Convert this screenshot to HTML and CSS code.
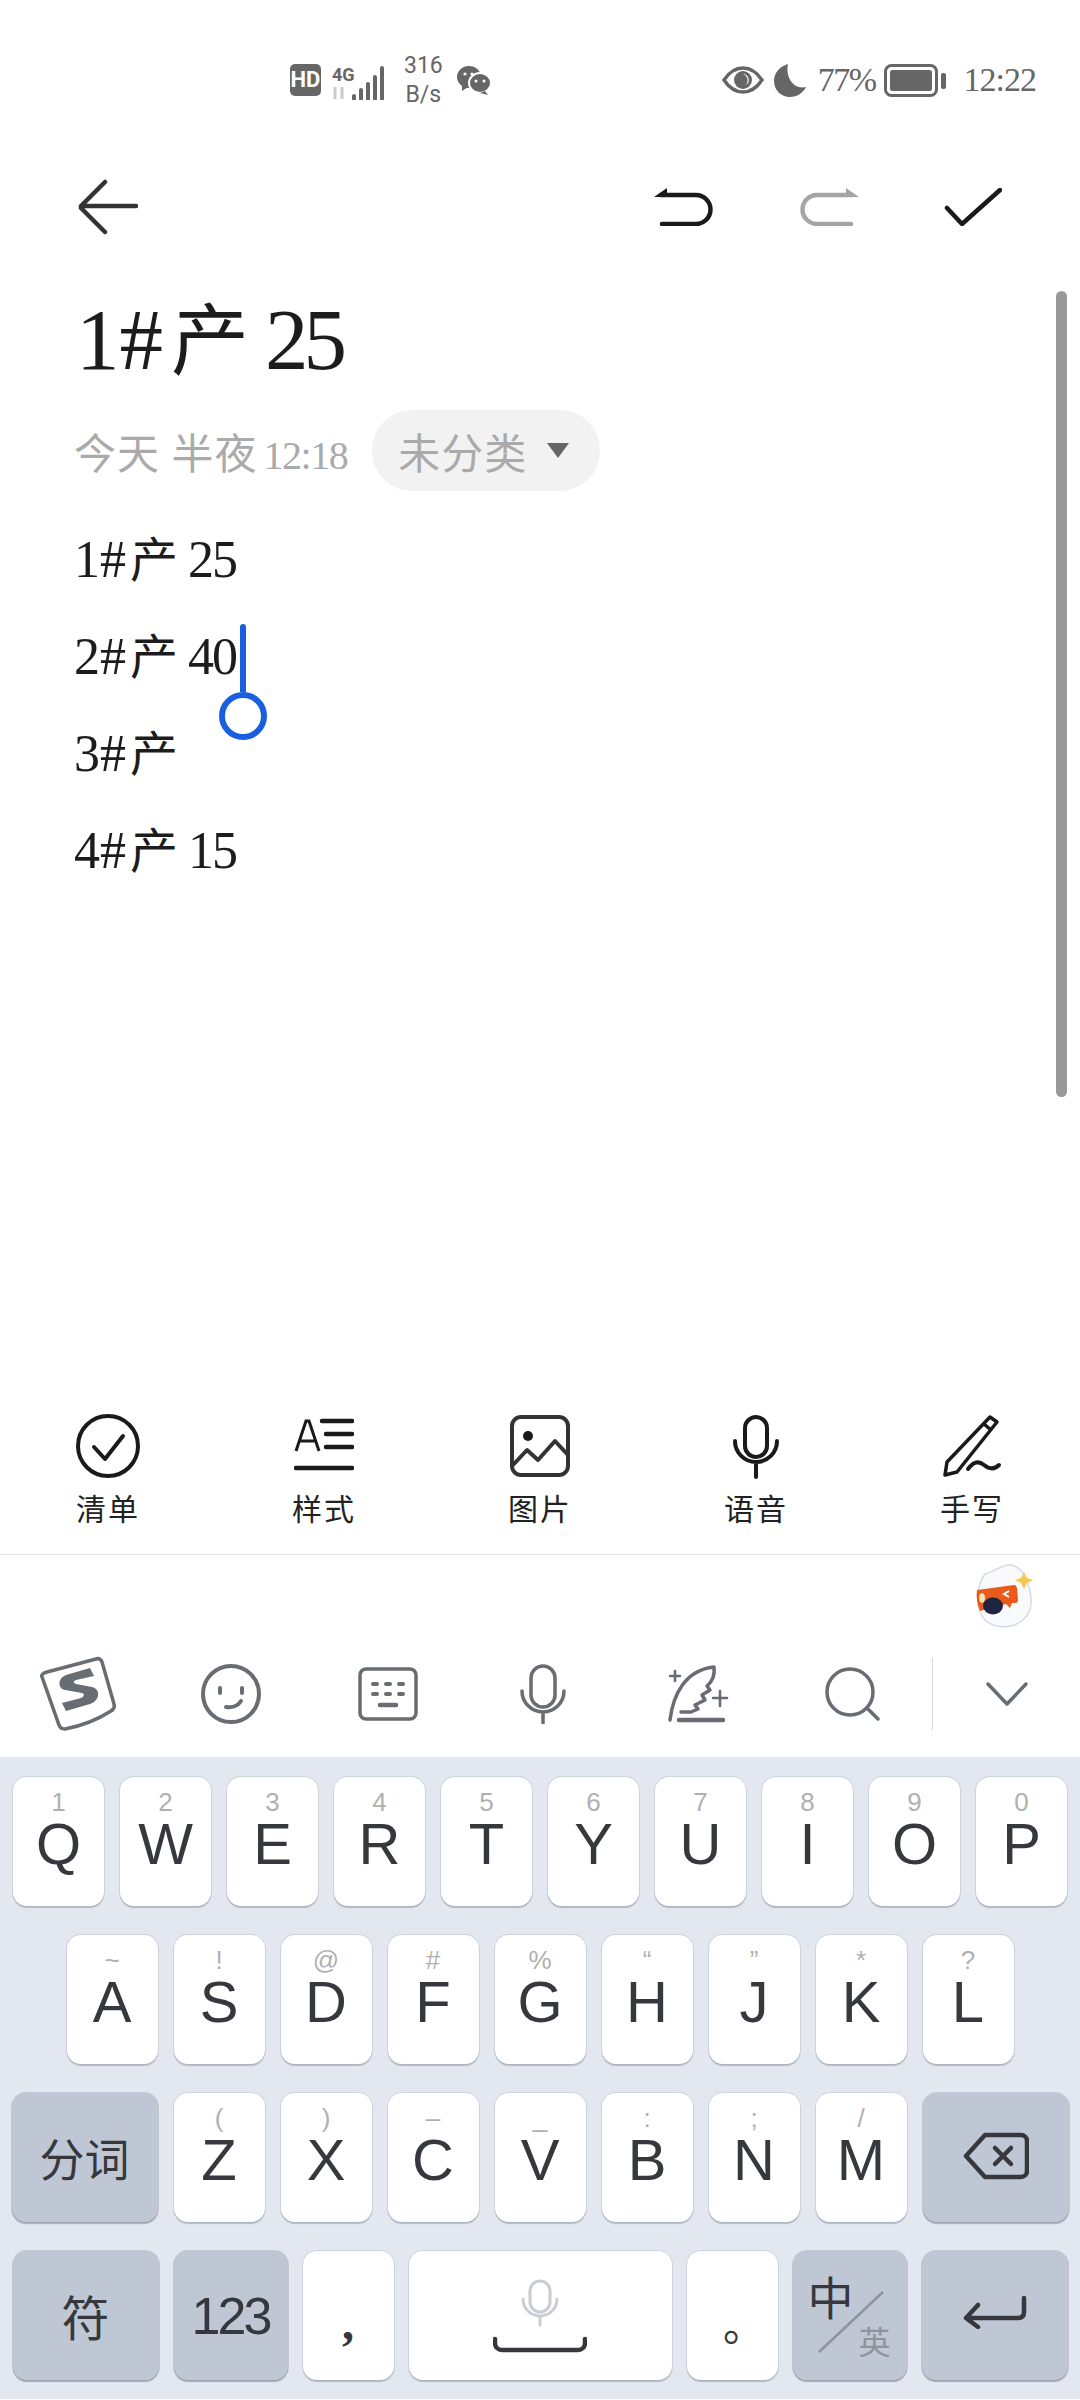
FILE: index.html
```html
<!DOCTYPE html>
<html lang="zh-CN">
<head>
  <meta charset="UTF-8">
  <title>备忘录</title>
  <link rel="stylesheet" href="styles.css">
</head>
<body>

  <!-- Status bar -->
  <div class="status">
    <svg class="st-hd" width="31" height="32" viewBox="0 0 31 32"><rect width="31" height="32" rx="5" fill="#666"/><text x="15.5" y="23" class="hd-text">HD</text></svg>
    <svg class="st-net" width="54" height="37" viewBox="0 -3 54 37">
      <text x="0" y="15" class="net-text">4G</text>
      <path d="M3 33V21M10 33V21" stroke="#ccc" stroke-width="3" fill="none"/>
      <path d="M22 33v-3M29 33v-9M36 33v-15M43 33v-22M50 33V2" stroke="#666" stroke-width="4" stroke-linecap="round" fill="none"/>
    </svg>
    <div class="speed"><span>316</span><span>B/s</span></div>
    <svg width="35" height="30" viewBox="0 0 35 30">
      <ellipse cx="13" cy="12" rx="12" ry="11" fill="#666"/>
      <path d="M6 20l0 6 6-4z" fill="#666"/>
      <ellipse cx="24" cy="18" rx="11" ry="10" fill="#666" stroke="#fff" stroke-width="2"/>
      <path d="M29 26l3 4-8-2z" fill="#666"/>
      <circle cx="9" cy="9" r="1.6" fill="#fff"/><circle cx="16" cy="9" r="1.6" fill="#fff"/>
      <circle cx="20" cy="16" r="1.5" fill="#fff"/><circle cx="28" cy="16" r="1.5" fill="#fff"/>
    </svg>
    <div class="status-right">
      <svg width="42" height="28" viewBox="0 0 42 28">
        <path d="M2 14C8 5 14 2 21 2s13 3 19 12c-6 9-12 12-19 12S8 23 2 14z" fill="none" stroke="#666" stroke-width="3.5"/>
        <circle cx="21" cy="14" r="9" fill="#666"/>
        <path d="M21 8a6 6 0 0 1 3 11 7 7 0 0 0-3-11z" fill="#fff"/>
      </svg>
      <svg class="moon" width="32" height="33" viewBox="0 0 32 33"><path d="M14 0C5 3 0 9 0 17c0 9 7 16 16 16 7 0 13-4 16-10-11 3-21-8-18-23z" fill="#666"/></svg>
      <span class="pct">77%</span>
      <svg class="batt" width="62" height="33" viewBox="0 0 62 33">
        <rect x="1.5" y="1.5" width="51" height="30" rx="6" fill="none" stroke="#666" stroke-width="3"/>
        <rect x="6" y="6" width="42" height="21" rx="2.5" fill="#666"/>
        <rect x="57" y="9" width="5" height="16" rx="2" fill="#666"/>
      </svg>
      <span class="clock">12:22</span>
    </div>
  </div>

  <!-- Top actions -->
  <div class="topbar">
    <svg class="back" width="60" height="56" viewBox="0 0 60 56">
      <path d="M27 3L3 27h55M3 29l24 24" fill="none" stroke="#333" stroke-width="4.5" stroke-linecap="round" stroke-linejoin="round"/>
    </svg>
    <div class="actions">
      <svg width="62" height="38" viewBox="0 0 62 38">
        <path d="M8 7h35a14.500 14.500 0 0 1 0 29H9" fill="none" stroke="#1a1a1a" stroke-width="4.5" stroke-linecap="round"/>
        <path d="M1 9L14 0v9z" fill="#1a1a1a"/>
      </svg>
      <svg class="redo" width="62" height="38" viewBox="0 0 62 38">
        <path d="M54 7H19a14.500 14.500 0 0 0 0 29h34" fill="none" stroke="#a5a5a5" stroke-width="4.5" stroke-linecap="round"/>
        <path d="M61 9L48 0v9z" fill="#a5a5a5"/>
      </svg>
      <svg class="check" width="58" height="38" viewBox="0 0 58 38">
        <path d="M3 20l15 16L56 2" fill="none" stroke="#1a1a1a" stroke-width="4.5" stroke-linecap="round" stroke-linejoin="round"/>
      </svg>
    </div>
  </div>

  <!-- Note -->
  <div class="note">
    <h1 class="title">1#<span class="han">产</span><span class="num">25</span></h1>
    <div class="meta">
      <span class="date">今天 半夜<span class="date-num">12:18</span></span>
      <span class="pill">未分类<i class="tri"></i></span>
    </div>
    <div class="lines">
      <p>1#<span class="han">产</span><span class="num">25</span></p>
      <p>2#<span class="han">产</span><span class="num">40</span></p>
      <p>3#<span class="han">产</span></p>
      <p>4#<span class="han">产</span><span class="num">15</span></p>
    </div>
    <div class="caret"><i class="caret-bar"></i><i class="caret-knob"></i></div>
    <div class="scrollbar"></div>
  </div>

  <!-- Note tools -->
  <div class="tools">
    <div class="tool">
      <svg width="64" height="66" viewBox="0 0 64 66"><circle cx="32" cy="33" r="30" fill="none" stroke="#1a1a1a" stroke-width="4"/><path d="M18 34l11 12 18-23" fill="none" stroke="#1a1a1a" stroke-width="4" stroke-linecap="round" stroke-linejoin="round"/></svg>
      <span>清单</span>
    </div>
    <div class="tool">
      <svg width="60" height="66" viewBox="0 0 60 66"><path d="M2 38L12 8h3l10 30M6 28h15" fill="none" stroke="#1a1a1a" stroke-width="3"/><path d="M28 8h30M32 21h26M32 34h26M2 55h56" fill="none" stroke="#1a1a1a" stroke-width="4.5" stroke-linecap="round"/></svg>
      <span>样式</span>
    </div>
    <div class="tool">
      <svg width="60" height="66" viewBox="0 0 60 66"><rect x="2" y="4" width="56" height="58" rx="9" fill="none" stroke="#333" stroke-width="4"/><circle cx="18" cy="23" r="5" fill="#1a1a1a"/><path d="M3 52l14-15 11 10 17-19 13 14" fill="none" stroke="#333" stroke-width="4" stroke-linejoin="round"/></svg>
      <span>图片</span>
    </div>
    <div class="tool">
      <svg width="46" height="66" viewBox="0 0 46 66"><rect x="12" y="4" width="22" height="40" rx="11" fill="none" stroke="#1a1a1a" stroke-width="4"/><path d="M2 28a21 21 0 0 0 42 0M23 50v14" fill="none" stroke="#1a1a1a" stroke-width="4" stroke-linecap="round"/></svg>
      <span>语音</span>
    </div>
    <div class="tool">
      <svg width="60" height="66" viewBox="0 0 60 66"><path d="M48 4l7 5-40 50-12 3 2-13zM42 11l7 6" fill="none" stroke="#1a1a1a" stroke-width="3.500" stroke-linejoin="round"/><path d="M26 56c6-8 11-8 16-4s10 5 15 0" fill="none" stroke="#1a1a1a" stroke-width="4" stroke-linecap="round"/></svg>
      <span>手写</span>
    </div>
  </div>

  <!-- Input method -->
  <div class="candidates">
    <svg width="60" height="68" viewBox="0 0 60 68">
      <path d="M10 12C20 10 26 2 36 3c8 1 13 8 16 16 5 14 7 30-4 39-11 9-28 9-38 0C0 48 1 24 10 12z" fill="#f9fafc" stroke="#d5dae4" stroke-width="1.500"/>
      <path d="M2 28l37-5c2 0 2 1 3 3l1 12c0 2-1 3-3 3h-3l-2 5-4-4-26 7c-3-7-4-14-3-21z" fill="#ea5a1c"/>
      <ellipse cx="7" cy="36" rx="3" ry="5" fill="#fbe3b4"/>
      <path d="M34 29l-5 3 5 3" fill="none" stroke="#fff" stroke-width="2"/>
      <ellipse cx="18" cy="44" rx="10" ry="8.500" fill="#1f2440"/>
      <path d="M49 10l3 6 6 2-6 3-3 6-3-6-6-3 6-2z" fill="#f5c851"/>
    </svg>
  </div>
  <div class="imebar">
    <div class="ime-cell">
      <svg width="80" height="76" viewBox="0 0 80 76">
        <path d="M9 16L58 3c3-1 5 0 6 3l12 42c1 3 0 5-3 7-14 9-30 15-46 18-3 0-5-1-6-4L4 21c-1-2 1-4 5-5z" fill="none" stroke="#686c73" stroke-width="3.500"/>
        <path d="M56 20l-4-8-24 7c-8 3-9 13-1 15l17 3c3 1 2 4-1 5l-19 5 4 8 24-7c10-3 11-15 2-17l-16-3c-3-1-3-3 0-4z" fill="#686c73"/>
      </svg>
    </div>
    <div class="ime-cell smile">
      <svg width="60" height="60" viewBox="0 0 60 60"><circle cx="30" cy="30" r="28" fill="none" stroke="#686c73" stroke-width="4"/><path d="M19 24v5M41 24v5M25 43c6 1 12-1 15-6" fill="none" stroke="#686c73" stroke-width="4" stroke-linecap="round"/></svg>
    </div>
    <div class="ime-cell">
      <svg width="60" height="54" viewBox="0 0 60 54"><rect x="2" y="2" width="56" height="50" rx="6" fill="none" stroke="#686c73" stroke-width="3.500"/><path d="M15 17h4M28 17h4M41 17h4M15 27h4M28 27h4M41 27h4" stroke="#686c73" stroke-width="4" stroke-linecap="round"/><path d="M22 38h16" stroke="#686c73" stroke-width="4.500" stroke-linecap="round"/></svg>
    </div>
    <div class="ime-cell">
      <svg width="46" height="60" viewBox="0 0 46 60"><rect x="11" y="2" width="24" height="41" rx="12" fill="none" stroke="#686c73" stroke-width="3.500"/><path d="M2 27a21 21 0 0 0 42 0M23 48v11" fill="none" stroke="#686c73" stroke-width="3.500" stroke-linecap="round"/></svg>
    </div>
    <div class="ime-cell">
      <svg width="62" height="58" viewBox="0 0 62 58">
        <path d="M3 55C6 30 18 5 47 2c1 8-1 14-7 19l3 4-8 5 3 5-10 5 3 4-7 3H14" fill="none" stroke="#686c73" stroke-width="3.500" stroke-linecap="round" stroke-linejoin="round"/>
        <path d="M12 55h44" stroke="#686c73" stroke-width="4.500" stroke-linecap="round"/>
        <path d="M8 6v10M3 11h10M53 26v15M46 33h14" stroke="#686c73" stroke-width="2.600" stroke-linecap="round"/>
      </svg>
    </div>
    <div class="ime-cell">
      <svg width="56" height="54" viewBox="0 0 56 54"><circle cx="25" cy="25" r="23" fill="none" stroke="#686c73" stroke-width="3.500"/><path d="M43 42l10 10" stroke="#686c73" stroke-width="3.500" stroke-linecap="round"/></svg>
    </div>
    <i class="ime-divider"></i>
    <div class="ime-hide">
      <svg width="42" height="24" viewBox="0 0 42 24"><path d="M2 2l19 20L40 2" fill="none" stroke="#686c73" stroke-width="3.500" stroke-linecap="round" stroke-linejoin="round"/></svg>
    </div>
  </div>

  <!-- Keyboard -->
  <div class="keyboard">
    <div class="row">
      <div class="key"><span class="sub">1</span><span class="cap">Q</span></div>
      <div class="key"><span class="sub">2</span><span class="cap">W</span></div>
      <div class="key"><span class="sub">3</span><span class="cap">E</span></div>
      <div class="key"><span class="sub">4</span><span class="cap">R</span></div>
      <div class="key"><span class="sub">5</span><span class="cap">T</span></div>
      <div class="key"><span class="sub">6</span><span class="cap">Y</span></div>
      <div class="key"><span class="sub">7</span><span class="cap">U</span></div>
      <div class="key"><span class="sub">8</span><span class="cap">I</span></div>
      <div class="key"><span class="sub">9</span><span class="cap">O</span></div>
      <div class="key"><span class="sub">0</span><span class="cap">P</span></div>
    </div>
    <div class="row">
      <div class="key"><span class="sub">~</span><span class="cap">A</span></div>
      <div class="key"><span class="sub">!</span><span class="cap">S</span></div>
      <div class="key"><span class="sub">@</span><span class="cap">D</span></div>
      <div class="key"><span class="sub">#</span><span class="cap">F</span></div>
      <div class="key"><span class="sub">%</span><span class="cap">G</span></div>
      <div class="key"><span class="sub">“</span><span class="cap">H</span></div>
      <div class="key"><span class="sub">”</span><span class="cap">J</span></div>
      <div class="key"><span class="sub">*</span><span class="cap">K</span></div>
      <div class="key"><span class="sub">?</span><span class="cap">L</span></div>
    </div>
    <div class="row">
      <div class="key key-fn key-wide"><span class="fn-text">分词</span></div>
      <div class="key"><span class="sub">(</span><span class="cap">Z</span></div>
      <div class="key"><span class="sub">)</span><span class="cap">X</span></div>
      <div class="key"><span class="sub">–</span><span class="cap">C</span></div>
      <div class="key"><span class="sub">_</span><span class="cap">V</span></div>
      <div class="key"><span class="sub">:</span><span class="cap">B</span></div>
      <div class="key"><span class="sub">;</span><span class="cap">N</span></div>
      <div class="key"><span class="sub">/</span><span class="cap">M</span></div>
      <div class="key key-fn key-wide key-del">
        <svg width="66" height="48" viewBox="0 0 66 48"><path d="M22 3h36a6 6 0 0 1 6 6v30a6 6 0 0 1-6 6H22L3 24z" fill="none" stroke="#36383d" stroke-width="4.500" stroke-linejoin="round"/><path d="M32 16l16 16M48 16L32 32" stroke="#36383d" stroke-width="4.500" stroke-linecap="round"/></svg>
      </div>
    </div>
    <div class="row row-bottom">
      <div class="key key-fn key-wide"><span class="fn-text fn-sym">符</span></div>
      <div class="key key-fn key-mid"><span class="fn-num">123</span></div>
      <div class="key"><span class="punct">,</span></div>
      <div class="key key-space">
        <svg width="94" height="74" viewBox="0 0 94 74">
          <rect x="37" y="2" width="20" height="31" rx="10" fill="none" stroke="#c8ccd3" stroke-width="3"/>
          <path d="M30 20a17 17 0 0 0 34 0M47 38v8" fill="none" stroke="#c8ccd3" stroke-width="3" stroke-linecap="round"/>
          <path d="M2 60v4c0 4 3 7 7 7h76c4 0 7-3 7-7v-4" fill="none" stroke="#36383d" stroke-width="4.500" stroke-linecap="round"/>
        </svg>
      </div>
      <div class="key"><span class="period">。</span></div>
      <div class="key key-fn key-mid key-lang">
        <span class="lang-main">中</span>
        <span class="lang-alt">英</span>
        <svg class="lang-slash" width="68" height="62" viewBox="0 0 68 62"><path d="M66 1L2 61" stroke="#8e939e" stroke-width="2.500"/></svg>
      </div>
      <div class="key key-fn key-wide key-enter">
        <svg width="64" height="34" viewBox="0 0 64 34"><path d="M61 3v14c0 4-2 6-6 6H4M15 10L3 23l12 9" fill="none" stroke="#36383d" stroke-width="4.500" stroke-linecap="round" stroke-linejoin="round"/></svg>
      </div>
    </div>
  </div>

</body>
</html>
```
FILE: styles.css
```css
* {
  box-sizing: border-box;
}

html, body {
  margin: 0;
  width: 1080px;
  height: 2400px;
  overflow: hidden;
  background: #fff;
}

body {
  font-family: "Liberation Serif", "Noto Sans CJK SC", serif;
  color: #222;
}

/* Status bar */
.status {
  height: 160px;
  padding: 0 44px 0 290px;
  display: flex;
  align-items: center;
  color: #666;
}

.hd-text {
  font: bold 22px "Roboto", sans-serif;
  fill: #fff;
  text-anchor: middle;
}

.net-text {
  font: bold 18px "Roboto", sans-serif;
  fill: #666;
}

.st-net {
  margin: 3px 0 0 11px;
}

.speed {
  margin: 0 13px 0 18px;
  display: flex;
  flex-direction: column;
  align-items: center;
  font: 23px/29px "Roboto", sans-serif;
}

.status-right {
  margin-left: auto;
  display: flex;
  align-items: center;
}

.moon {
  margin-left: 10px;
}

.pct {
  margin-left: 12px;
  font-size: 34px;
  letter-spacing: -1.5px;
}

.batt {
  margin-left: 8px;
}

.clock {
  margin-left: 18px;
  font-size: 34px;
  letter-spacing: -1px;
}

/* Top actions */
.topbar {
  height: 92px;
  padding: 0 78px;
  display: flex;
  align-items: center;
  justify-content: space-between;
}

.back {
  margin-top: 2px;
}

.actions {
  margin-top: 2px;
  display: flex;
  align-items: center;
}

.redo {
  margin-left: 83px;
}

.check {
  margin-left: 84px;
}

/* Note */
.note {
  position: relative;
  height: 1161px;
  padding: 38px 0 0 74px;
}

.title {
  margin: 0 0 0 2px;
  font-size: 87px;
  line-height: 100px;
  font-weight: normal;
  color: #1c1c1c;
}

.title .han {
  margin: 0 16px 0 8px;
  font-size: 78px;
  line-height: 1;
}

.title .num {
  letter-spacing: -5px;
}

.meta {
  margin-top: 20px;
  display: flex;
  align-items: center;
  color: #aaa;
  font-size: 42px;
  letter-spacing: 1px;
}

.date-num {
  margin-left: 6px;
  font-size: 40px;
  letter-spacing: -1.5px;
}

.pill {
  margin-left: 25px;
  height: 81px;
  width: 228px;
  padding-left: 26px;
  display: flex;
  align-items: center;
  border-radius: 40px;
  background: #f2f2f2;
}

.tri {
  margin-left: 20px;
  width: 0;
  height: 0;
  border-left: 11px solid transparent;
  border-right: 11px solid transparent;
  border-top: 15px solid #666;
}

.lines {
  margin-top: 20px;
  font-size: 52px;
  line-height: 97px;
  color: #1c1c1c;
}

.lines p {
  margin: 0;
  height: 97px;
}

.lines .han {
  margin: 0 10px 0 4px;
  font-size: 48px;
  line-height: 1;
}

.lines .num {
  letter-spacing: -2px;
}

.caret {
  position: absolute;
  left: 219px;
  top: 372px;
  width: 48px;
}

.caret-bar {
  display: block;
  margin-left: 21px;
  width: 6px;
  height: 68px;
  border-radius: 3px 3px 0 0;
  background: #1a5fe0;
}

.caret-knob {
  display: block;
  width: 48px;
  height: 48px;
  border: 6px solid #1a5fe0;
  border-radius: 50%;
  background: #fff;
}

.scrollbar {
  position: absolute;
  left: 1056px;
  top: 39px;
  width: 11px;
  height: 806px;
  border-radius: 6px;
  background: #999;
}

/* Note tools */
.tools {
  display: grid;
  grid-template-columns: repeat(5, 216px);
  height: 142px;
  border-bottom: 1px solid #e2e2e2;
}

.tool {
  display: flex;
  flex-direction: column;
  align-items: center;
  font-size: 30px;
  color: #222;
}

.tool span {
  margin-top: 11px;
  line-height: 40px;
  letter-spacing: 2px;
}

/* Input method */
.candidates {
  height: 84px;
  padding: 7px 45px 0 0;
  display: flex;
  justify-content: flex-end;
  align-items: flex-start;
}

.imebar {
  height: 118px;
  padding-bottom: 8px;
  display: flex;
  align-items: center;
}

.ime-cell {
  width: 155px;
  display: flex;
  justify-content: center;
}

.smile {
  padding-right: 3px;
}

.ime-divider {
  margin-left: 2px;
  width: 1px;
  height: 72px;
  background: #d4d6da;
}

.ime-hide {
  flex: 1;
  display: flex;
  justify-content: center;
}

/* Keyboard */
.keyboard {
  height: 642px;
  padding: 20px 13px 0;
  display: flex;
  flex-direction: column;
  gap: 29px;
  background: #e3e7ef;
}

.row {
  display: flex;
  justify-content: center;
  gap: 16px;
}

.row-bottom {
  gap: 15px;
}

.key {
  position: relative;
  width: 91px;
  height: 129px;
  flex: none;
  display: flex;
  flex-direction: column;
  align-items: center;
  justify-content: center;
  border-radius: 14px;
  background: #fff;
  box-shadow: 0 0 0 1px rgba(160, 168, 184, .3), 0 2px 1px #b4bbc8;
}

.key:has(.cap) {
  justify-content: flex-start;
}

.sub {
  height: 30px;
  margin-top: 10px;
  font: 26px/30px "Liberation Sans", sans-serif;
  color: #b0b0b0;
}

.cap {
  font: 58px/54px "Liberation Sans", sans-serif;
  color: #36383d;
}

.key-fn {
  background: #bfc7d4;
  box-shadow: 0 0 0 1px rgba(150, 158, 174, .4), 0 2px 1px #a3aab8;
}

.key-wide {
  width: 146px;
}

.key-mid {
  width: 114px;
}

.key-del svg {
  margin-bottom: 4px;
}

.key-enter svg {
  margin-bottom: 8px;
}

.key-space {
  width: 263px;
  padding-top: 28px;
  justify-content: flex-start;
}

.fn-text {
  font: 45px/1 "Noto Sans CJK SC", sans-serif;
  color: #36383d;
}

.fn-sym {
  font-size: 48px;
  margin-bottom: 2px;
}

.fn-num {
  font: 52px/1 "Liberation Sans", sans-serif;
  color: #36383d;
  letter-spacing: -3px;
}

.punct {
  margin-top: 14px;
  font: bold 48px/1 "Liberation Serif", serif;
  color: #36383d;
}

.period {
  margin: 14px 0 0 24px;
  font: 42px/1 "Noto Sans CJK SC", sans-serif;
  color: #36383d;
}

.key-lang {
  padding: 19px 16px 0 15px;
  justify-content: flex-start;
}

.lang-main {
  align-self: flex-start;
  font: 46px/50px "Noto Sans CJK SC", sans-serif;
  color: #36383d;
}

.lang-alt {
  margin-top: 2px;
  align-self: flex-end;
  font: 32px/36px "Noto Sans CJK SC", sans-serif;
  color: #8e939e;
}

.lang-slash {
  position: absolute;
  left: 24px;
  top: 40px;
}
```
